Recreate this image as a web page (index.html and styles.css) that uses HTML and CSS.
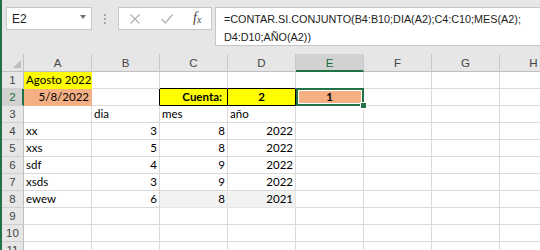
FILE: index.html
```html
<!DOCTYPE html>
<html>
<head>
<meta charset="utf-8">
<link rel="stylesheet" href="styles.css">
</head>
<body>
<div class="app">
  <div class="toolbar">
    <div class="namebox"><span class="nb-text">E2</span><span class="caret"></span></div>
    <div class="grip"><i></i><i></i><i></i></div>
    <div class="fxbtns">
      <svg class="ic" width="12" height="12" viewBox="0 0 12 12"><path d="M1.5 1.5 L10.5 10.5 M10.5 1.5 L1.5 10.5" stroke="#b4b4b4" stroke-width="1.3" fill="none"/></svg>
      <svg class="ic" width="14" height="12" viewBox="0 0 14 12"><path d="M1.5 6 L5.5 10 L12.5 1.5" stroke="#b4b4b4" stroke-width="1.4" fill="none"/></svg>
      <span class="fx">f<sub>x</sub></span>
    </div>
    <div class="formula">=CONTAR.SI.CONJUNTO(B4:B10;DIA(A2);C4:C10;MES(A2);<br>D4:D10;AÑO(A2))</div>
  </div>
  <div class="sheet">
    <div class="corner"><svg width="21" height="17" viewBox="0 0 21 17"><path d="M19 6 L19 14 L11 14 Z" fill="#bdbdbd"/></svg></div>
    <div class="ch">A</div><div class="ch">B</div><div class="ch">C</div><div class="ch">D</div><div class="ch ch-sel">E</div><div class="ch">F</div><div class="ch">G</div><div class="ch">H</div>

    <div class="rh">1</div>
    <div class="c yel-a">Agosto 2022</div><div class="c"></div><div class="c bb-k"></div><div class="c bb-k"></div><div class="c"></div><div class="c"></div><div class="c"></div><div class="c"></div>

    <div class="rh rh-sel">2</div>
    <div class="c sal-a r">5/8/2022</div><div class="c br-k"></div><div class="c yel r b cuenta">Cuenta:</div><div class="c yel ctr b">2</div><div class="c sal-e ctr b sel">1</div><div class="c"></div><div class="c"></div><div class="c"></div>

    <div class="rh">3</div>
    <div class="c"></div><div class="c">dia</div><div class="c">mes</div><div class="c">año</div><div class="c"></div><div class="c"></div><div class="c"></div><div class="c"></div>

    <div class="rh">4</div>
    <div class="c">xx</div><div class="c r">3</div><div class="c r">8</div><div class="c r">2022</div><div class="c"></div><div class="c"></div><div class="c"></div><div class="c"></div>

    <div class="rh">5</div>
    <div class="c">xxs</div><div class="c r">5</div><div class="c r">8</div><div class="c r">2022</div><div class="c"></div><div class="c"></div><div class="c"></div><div class="c"></div>

    <div class="rh">6</div>
    <div class="c">sdf</div><div class="c r">4</div><div class="c r">9</div><div class="c r">2022</div><div class="c"></div><div class="c"></div><div class="c"></div><div class="c"></div>

    <div class="rh">7</div>
    <div class="c">xsds</div><div class="c r">3</div><div class="c r">9</div><div class="c r">2022</div><div class="c"></div><div class="c"></div><div class="c"></div><div class="c"></div>

    <div class="rh">8</div>
    <div class="c">ewew</div><div class="c r">6</div><div class="c r gray">8</div><div class="c r gray">2021</div><div class="c"></div><div class="c"></div><div class="c"></div><div class="c"></div>

    <div class="rh">9</div>
    <div class="c"></div><div class="c"></div><div class="c"></div><div class="c"></div><div class="c"></div><div class="c"></div><div class="c"></div><div class="c"></div>

    <div class="rh">10</div>
    <div class="c"></div><div class="c"></div><div class="c"></div><div class="c"></div><div class="c"></div><div class="c"></div><div class="c"></div><div class="c"></div>

    <div class="rh">11</div>
    <div class="c"></div><div class="c"></div><div class="c"></div><div class="c"></div><div class="c"></div><div class="c"></div><div class="c"></div><div class="c"></div>
  </div>
</div>
</body>
</html>
```
FILE: styles.css
```css
html, body { margin: 0; padding: 0; background: #fff; }
.app {
  width: 538px;
  height: 250px;
  overflow: hidden;
  border-left: 2px solid #217346;
  font-family: "Liberation Sans", Arial, sans-serif;
}
.toolbar {
  box-sizing: border-box;
  height: 54px;
  background: #e6e6e6;
  display: flex;
  align-items: flex-start;
  padding-top: 7px;
}
.toolbar > * { flex-shrink: 0; }
.namebox {
  box-sizing: border-box;
  margin-left: 4px;
  width: 86px;
  height: 23px;
  background: #fff;
  border: 1px solid #c6c6c6;
  display: flex;
  align-items: center;
  justify-content: space-between;
  padding: 0 5px 0 5px;
  font-size: 12px;
  color: #222;
}
.caret {
  width: 0; height: 0;
  border-left: 3.5px solid transparent;
  border-right: 3.5px solid transparent;
  border-top: 4px solid #707070;
  margin-top: -3px;
}
.grip {
  width: 26px;
  height: 23px;
  display: flex;
  flex-direction: column;
  align-items: center;
  justify-content: center;
  gap: 2px;
}
.grip i { display: block; width: 2px; height: 2px; background: #a8a8a8; }
.fxbtns {
  box-sizing: border-box;
  width: 94px;
  height: 23px;
  background: #fff;
  border: 1px solid #c6c6c6;
  display: flex;
  align-items: center;
  padding-left: 10px;
  gap: 19px;
}
.fxbtns .ic { display: block; }
.fx {
  font-family: "Liberation Serif", serif;
  font-style: italic;
  font-size: 14px;
  color: #444;
  line-height: 14px;
}
.fx sub { font-size: 10px; vertical-align: -1px; }
.formula {
  box-sizing: border-box;
  margin-left: 3px;
  width: 340px;
  height: 39px;
  background: #fff;
  border: 1px solid #c6c6c6;
  padding: 2px 0 0 8px;
  font-size: 10.8px;
  line-height: 18px;
  color: #222;
  white-space: nowrap;
}
.sheet {
  display: grid;
  grid-template-columns: 22px repeat(8, 68px);
  grid-template-rows: 18px;
  grid-auto-rows: 17px;
}
.corner {
  box-sizing: border-box;
  background: #e6e6e6;
  border-right: 1px solid #bfbfbf;
  border-bottom: 1px solid #bfbfbf;
}
.corner svg { display: block; }
.ch {
  box-sizing: border-box;
  background: #e6e6e6;
  border-right: 1px solid #c8c8c8;
  border-bottom: 1px solid #bfbfbf;
  text-align: center;
  font-size: 11.5px;
  line-height: 18px;
  color: #444;
}
.ch-sel {
  background: #d2d2d2;
  border-bottom: 2px solid #217346;
  color: #1e6b41;
}
.rh {
  box-sizing: border-box;
  background: #e6e6e6;
  border-right: 1px solid #bfbfbf;
  border-bottom: 1px solid #d0d0d0;
  text-align: center;
  font-size: 11.5px;
  line-height: 16px;
  color: #444;
}
.rh-sel {
  background: #d2d2d2;
  border-right: 2px solid #217346;
  color: #1e6b41;
  padding-left: 1px;
}
.c {
  box-sizing: border-box;
  border-right: 1px solid #dadada;
  border-bottom: 1px solid #dadada;
  padding: 0 2px;
  font-family: "Lato", "Liberation Sans", sans-serif;
  font-size: 11.5px;
  line-height: 16px;
  color: #000;
  white-space: nowrap;
  overflow: hidden;
}
.r { text-align: right; }
.ctr { text-align: center; }
.b { font-weight: bold; }
.yel-a { background: #ffff00; border-right-color: #ffff00; border-bottom-color: #ffff00; }
.sal-a { background: #f4b084; border-right-color: #f4b084; border-bottom-color: #f4b084; }
.bb-k { border-bottom-color: #000; }
.br-k { border-right-color: #000; }
.yel { background: #ffff00; border-right-color: #000; border-bottom-color: #000; }
.cuenta { padding-right: 5px; }
.sal-e { background: #f4b084; }
.gray { background: #f2f2f2; border-right-color: #e6e6e6; border-bottom-color: #e6e6e6; }
.sel { position: relative; overflow: visible; }
.sel::after {
  content: "";
  position: absolute;
  left: 0; top: -1px; right: -1px; bottom: -1px;
  border: 2px solid #217346;
  box-shadow: inset 0 0 0 1px #fff;
}
.sel::before {
  content: "";
  position: absolute;
  right: -4px; bottom: -4px;
  width: 5px; height: 5px;
  background: #217346;
  border: 1px solid #fff;
  z-index: 2;
}
```
